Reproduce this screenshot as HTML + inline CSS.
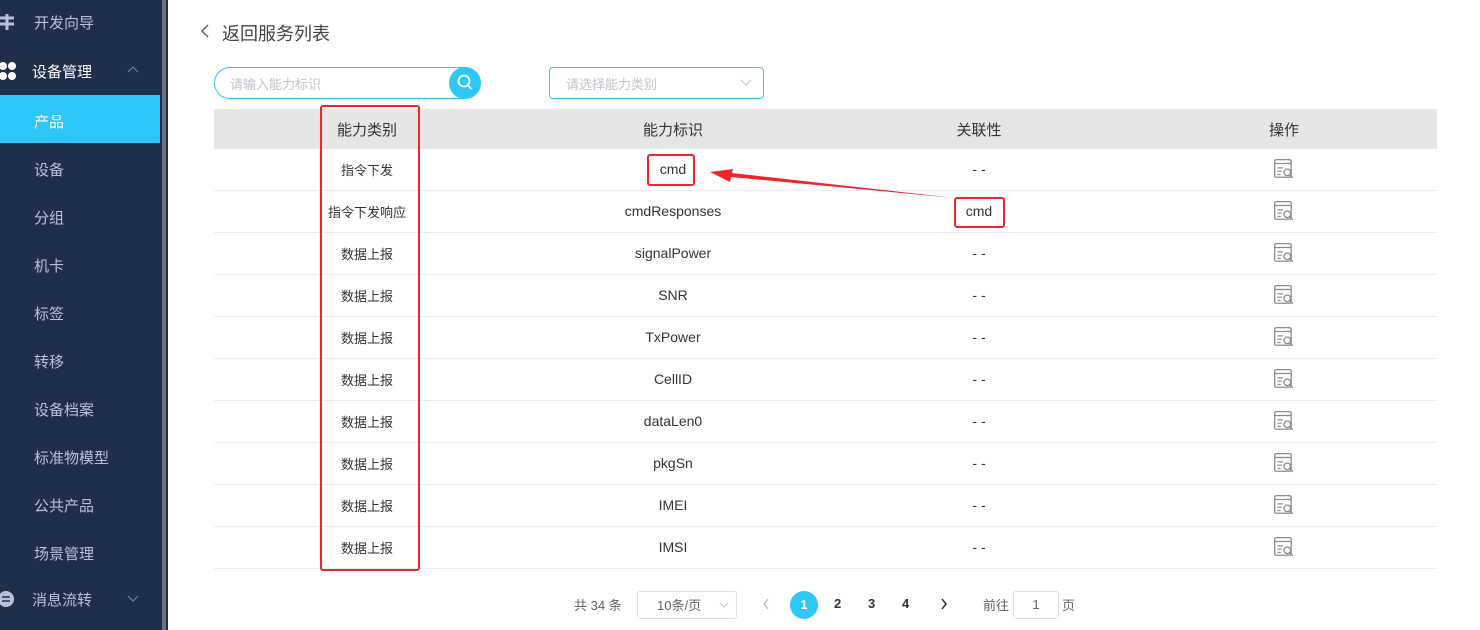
<!DOCTYPE html>
<html><head><meta charset="utf-8"><style>
*{margin:0;padding:0;box-sizing:border-box}
body{width:1480px;height:630px;overflow:hidden;background:#fff;font-family:"Liberation Sans","Noto Sans CJK SC",sans-serif;position:relative}
.side{position:absolute;left:0;top:0;width:168px;height:630px;background:#1f2e4a}
.sb{position:absolute;left:162px;top:0;width:4px;height:630px;background:#6b7287}
.mi{position:absolute;left:34px;font-size:15px;color:#b8c3d6}
.pi{position:absolute;left:0;width:160px;height:48px;top:95px;background:#2ec7f7}
.t{position:absolute;font-size:14px;color:#333;text-align:center;width:306px}
.hr{position:absolute;left:214px;width:1223px;height:1px;background:#ebeef5}
.red{position:absolute;border:2px solid #f2232a;border-radius:3px}
.ic{position:absolute;width:22px;height:22px}
</style></head><body>
<div class="side"></div><div class="sb"></div>
<div class="pi"></div>
<div style="position:absolute;left:0;top:14px;width:14px;height:14px">
<svg width="16" height="16"><path d="M0 4h14M0 10h14M7 0v16" stroke="#b8c3d6" stroke-width="3"/></svg></div>
<div class="mi" style="top:12px">开发向导</div>
<svg style="position:absolute;left:0;top:62px" width="16" height="18"><circle cx="3" cy="4" r="4" fill="#fff"/><circle cx="12" cy="4" r="4" fill="#fff"/><circle cx="3" cy="14" r="4" fill="#fff"/><circle cx="12" cy="14" r="4" fill="#fff"/></svg>
<div class="mi" style="top:61px;left:32px;color:#fff">设备管理</div>
<svg style="position:absolute;left:127px;top:66px" width="12" height="8"><path d="M1 6L6 1L11 6" stroke="#7d889b" fill="none"/></svg>
<div class="mi" style="top:111px;color:#fff">产品</div>
<div class="mi" style="top:159px">设备</div>
<div class="mi" style="top:207px">分组</div>
<div class="mi" style="top:255px">机卡</div>
<div class="mi" style="top:303px">标签</div>
<div class="mi" style="top:351px">转移</div>
<div class="mi" style="top:399px">设备档案</div>
<div class="mi" style="top:447px">标准物模型</div>
<div class="mi" style="top:495px">公共产品</div>
<div class="mi" style="top:543px">场景管理</div>
<svg style="position:absolute;left:0;top:591px" width="16" height="16"><circle cx="6" cy="8" r="8" fill="#b8c3d6"/><path d="M2 6h8M2 10h8" stroke="#1f2e4a" stroke-width="1.5"/></svg>
<div class="mi" style="top:589px;left:32px">消息流转</div>
<svg style="position:absolute;left:127px;top:595px" width="12" height="8"><path d="M1 1L6 6L11 1" stroke="#7d889b" fill="none"/></svg>

<svg style="position:absolute;left:200px;top:24px" width="10" height="14"><path d="M8 1L2 7L8 13" stroke="#666" stroke-width="1.5" fill="none"/></svg>
<div style="position:absolute;left:222px;top:20px;font-size:18px;color:#444">返回服务列表</div>

<div style="position:absolute;left:214px;top:67px;width:266px;height:32px;border:1px solid #2ec7f7;border-radius:16px"></div>
<div style="position:absolute;left:230px;top:74px;font-size:13px;color:#c0c4cc">请输入能力标识</div>
<div style="position:absolute;left:449px;top:67px;width:32px;height:32px;border-radius:16px;background:#2ec7f7"></div>
<svg style="position:absolute;left:455px;top:73px" width="20" height="20"><circle cx="9" cy="8" r="5.5" stroke="#fff" stroke-width="1.8" fill="none"/><path d="M12.5 12l4 4" stroke="#fff" stroke-width="1.8"/></svg>
<div style="position:absolute;left:549px;top:67px;width:215px;height:32px;border:1px solid #2ec7f7;border-radius:4px"></div>
<div style="position:absolute;left:566px;top:74px;font-size:13px;color:#c0c4cc">请选择能力类别</div>
<svg style="position:absolute;left:740px;top:79px" width="12" height="8"><path d="M1 1L6 6L11 1" stroke="#c0c4cc" fill="none"/></svg>

<div style="position:absolute;left:214px;top:109px;width:1223px;height:40px;background:#e6e6e6"></div>
<div class="t" style="left:214px;top:119px;font-size:15px">能力类别</div>
<div class="t" style="left:520px;top:119px;font-size:15px">能力标识</div>
<div class="t" style="left:826px;top:119px;font-size:15px">关联性</div>
<div class="t" style="left:1131px;top:119px;font-size:15px">操作</div>

<div id="rows"></div>
<script>
var a=[["指令下发","cmd","- -"],["指令下发响应","cmdResponses",""],["数据上报","signalPower","- -"],["数据上报","SNR","- -"],["数据上报","TxPower","- -"],["数据上报","CellID","- -"],["数据上报","dataLen0","- -"],["数据上报","pkgSn","- -"],["数据上报","IMEI","- -"],["数据上报","IMSI","- -"]];
var h="";
a.forEach(function(r,i){var y=149+i*42;
h+='<div class="t" style="left:214px;top:'+(y+11)+'px;font-size:13px">'+r[0]+'</div>';
h+='<div class="t" style="left:520px;top:'+(y+12)+'px">'+r[1]+'</div>';
h+='<div class="t" style="left:826px;top:'+(y+12)+'px">'+r[2]+'</div>';
h+='<svg class="ic" style="left:1273px;top:'+(y+9)+'px" viewBox="0 0 20 20"><rect x="1.5" y="1.5" width="15" height="16" rx="1.5" stroke="#8c8c8c" fill="none" stroke-width="1.2"/><path d="M1.5 5h15M4 9h5M4 12h4M4 15h3" stroke="#8c8c8c" stroke-width="1.1"/><circle cx="13" cy="13" r="3" stroke="#8c8c8c" fill="#fff" stroke-width="1.2"/><path d="M15 15l3 3" stroke="#8c8c8c" stroke-width="1.3"/></svg>';
h+='<div class="hr" style="top:'+(y+41)+'px"></div>';});
document.getElementById("rows").innerHTML=h;
</script>
<div class="t" style="left:826px;top:203px">cmd</div>

<div class="red" style="left:320px;top:105px;width:100px;height:466px"></div>
<div class="red" style="left:647px;top:154px;width:48px;height:32px"></div>
<div class="red" style="left:954px;top:197px;width:51px;height:31px"></div>
<svg style="position:absolute;left:700px;top:160px" width="260" height="45"><path d="M255 38L32 13L33 9L10 12L30 22L31 17Z" fill="#f2232a"/></svg>

<div style="position:absolute;left:574px;top:595px;font-size:13px;color:#606266">共 34 条</div>
<div style="position:absolute;left:637px;top:591px;width:100px;height:28px;border:1px solid #dcdfe6;border-radius:3px"></div>
<div style="position:absolute;left:657px;top:595px;font-size:13px;color:#606266">10条/页</div>
<svg style="position:absolute;left:719px;top:602px" width="10" height="7"><path d="M1 1L5 5L9 1" stroke="#c0c4cc" fill="none"/></svg>
<svg style="position:absolute;left:762px;top:598px" width="8" height="12"><path d="M6 1L2 6L6 11" stroke="#c0c4cc" stroke-width="1.5" fill="none"/></svg>
<div style="position:absolute;left:790px;top:591px;width:28px;height:28px;border-radius:14px;background:#2ec7f7;color:#fff;font-size:13px;font-weight:bold;text-align:center;line-height:28px">1</div>
<div style="position:absolute;left:834px;top:596px;font-size:13px;font-weight:bold;color:#303133">2</div>
<div style="position:absolute;left:868px;top:596px;font-size:13px;font-weight:bold;color:#303133">3</div>
<div style="position:absolute;left:902px;top:596px;font-size:13px;font-weight:bold;color:#303133">4</div>
<svg style="position:absolute;left:940px;top:598px" width="8" height="12"><path d="M2 1L6 6L2 11" stroke="#303133" stroke-width="1.5" fill="none"/></svg>
<div style="position:absolute;left:983px;top:595px;font-size:13px;color:#606266">前往</div>
<div style="position:absolute;left:1013px;top:591px;width:46px;height:28px;border:1px solid #dcdfe6;border-radius:3px;text-align:center;line-height:26px;font-size:13px;color:#606266">1</div>
<div style="position:absolute;left:1062px;top:595px;font-size:13px;color:#606266">页</div>
</body></html>
